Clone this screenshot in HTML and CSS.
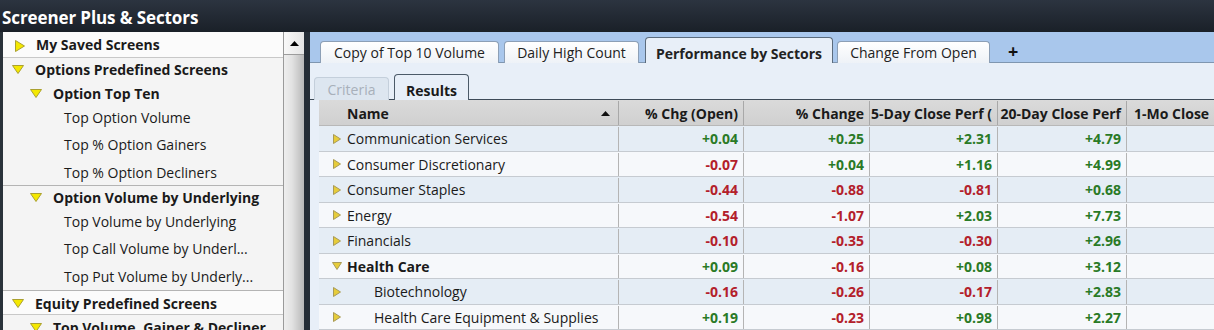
FILE: index.html
```html
<!DOCTYPE html>
<html>
<head>
<meta charset="utf-8">
<link rel="stylesheet" href="styles.css">
</head>
<body>
<div class="app">
  <div class="titlebar">Screener Plus &amp; Sectors</div>
  <div class="main">
    <div class="left">
      <div class="tree">
        <div class="row top first"><svg class="tri-r" viewBox="0 0 10 12"><polygon points="0.5,0.5 9.5,6 0.5,11.5"/></svg><span>My Saved Screens</span></div>
        <div class="grp g5">
          <div class="row top h23"><svg class="tri-d" viewBox="0 0 12 9"><polygon points="0.5,0.5 11.5,0.5 6,8.5"/></svg><span>Options Predefined Screens</span></div>
          <div class="row lvl1 h24"><svg class="tri-d" viewBox="0 0 12 9"><polygon points="0.5,0.5 11.5,0.5 6,8.5"/></svg><span>Option Top Ten</span></div>
          <div class="row leaf h25">Top Option Volume</div>
          <div class="row leaf h27">Top % Option Gainers</div>
          <div class="row leaf h28">Top % Option Decliners</div>
        </div>
        <div class="grp g4">
          <div class="row lvl1 h23"><svg class="tri-d" viewBox="0 0 12 9"><polygon points="0.5,0.5 11.5,0.5 6,8.5"/></svg><span>Option Volume by Underlying</span></div>
          <div class="row leaf h25">Top Volume by Underlying</div>
          <div class="row leaf h27">Top Call Volume by Underl...</div>
          <div class="row leaf h29">Top Put Volume by Underly...</div>
        </div>
        <div class="row top eq"><svg class="tri-d" viewBox="0 0 12 9"><polygon points="0.5,0.5 11.5,0.5 6,8.5"/></svg><span>Equity Predefined Screens</span></div>
        <div class="row lvl1 last"><svg class="tri-d" viewBox="0 0 12 9"><polygon points="0.5,0.5 11.5,0.5 6,8.5"/></svg><span>Top Volume, Gainer &amp; Decliner</span></div>
      </div>
      <div class="scroll">
        <div class="sbtn"><svg viewBox="0 0 9 5"><polygon points="0,5 9,5 4.5,0"/></svg></div>
        <div class="strack"></div>
      </div>
    </div>
    <div class="divider"></div>
    <div class="right">
      <div class="tabstrip">
        <div class="tab t1">Copy of Top 10 Volume</div>
        <div class="tab t2">Daily High Count</div>
        <div class="tab t3 active">Performance by Sectors</div>
        <div class="tab t4">Change From Open</div>
        <div class="plus">+</div>
      </div>
      <div class="subbar">
        <div class="stab disabled">Criteria</div>
        <div class="stab on">Results</div>
      </div>
      <div class="gridwrap">
        <div class="grid">
          <div class="hrow">
            <div class="hc name"><span>Name</span><svg class="sort" viewBox="0 0 9 5"><polygon points="0,5 9,5 4.5,0"/></svg></div>
            <div class="hc">% Chg (Open)</div>
            <div class="hc">% Change</div>
            <div class="hc">5-Day Close Perf (</div>
            <div class="hc">20-Day Close Perf</div>
            <div class="hc lastc">1-Mo Close</div>
          </div>
          <div class="drow odd">
            <div class="c name"><svg class="ntri" viewBox="0 0 8 10"><polygon points="0.5,0.5 7.5,5 0.5,9.5"/></svg>Communication Services</div>
            <div class="c up">+0.04</div><div class="c up">+0.25</div><div class="c up">+2.31</div><div class="c up">+4.79</div><div class="c"></div>
          </div>
          <div class="drow">
            <div class="c name"><svg class="ntri" viewBox="0 0 8 10"><polygon points="0.5,0.5 7.5,5 0.5,9.5"/></svg>Consumer Discretionary</div>
            <div class="c dn">-0.07</div><div class="c up">+0.04</div><div class="c up">+1.16</div><div class="c up">+4.99</div><div class="c"></div>
          </div>
          <div class="drow odd">
            <div class="c name"><svg class="ntri" viewBox="0 0 8 10"><polygon points="0.5,0.5 7.5,5 0.5,9.5"/></svg>Consumer Staples</div>
            <div class="c dn">-0.44</div><div class="c dn">-0.88</div><div class="c dn">-0.81</div><div class="c up">+0.68</div><div class="c"></div>
          </div>
          <div class="drow">
            <div class="c name"><svg class="ntri" viewBox="0 0 8 10"><polygon points="0.5,0.5 7.5,5 0.5,9.5"/></svg>Energy</div>
            <div class="c dn">-0.54</div><div class="c dn">-1.07</div><div class="c up">+2.03</div><div class="c up">+7.73</div><div class="c"></div>
          </div>
          <div class="drow odd">
            <div class="c name"><svg class="ntri" viewBox="0 0 8 10"><polygon points="0.5,0.5 7.5,5 0.5,9.5"/></svg>Financials</div>
            <div class="c dn">-0.10</div><div class="c dn">-0.35</div><div class="c dn">-0.30</div><div class="c up">+2.96</div><div class="c"></div>
          </div>
          <div class="drow">
            <div class="c name bold"><svg class="ntri" viewBox="0 0 10 8"><polygon points="0.5,0.5 9.5,0.5 5,7.5"/></svg>Health Care</div>
            <div class="c up">+0.09</div><div class="c dn">-0.16</div><div class="c up">+0.08</div><div class="c up">+3.12</div><div class="c"></div>
          </div>
          <div class="drow odd">
            <div class="c name sub"><svg class="ntri" viewBox="0 0 8 10"><polygon points="0.5,0.5 7.5,5 0.5,9.5"/></svg><span>Biotechnology</span></div>
            <div class="c dn">-0.16</div><div class="c dn">-0.26</div><div class="c dn">-0.17</div><div class="c up">+2.83</div><div class="c"></div>
          </div>
          <div class="drow">
            <div class="c name sub"><svg class="ntri" viewBox="0 0 8 10"><polygon points="0.5,0.5 7.5,5 0.5,9.5"/></svg><span>Health Care Equipment &amp; Supplies</span></div>
            <div class="c up">+0.19</div><div class="c dn">-0.23</div><div class="c up">+0.98</div><div class="c up">+2.27</div><div class="c"></div>
          </div>
        </div>
      </div>
    </div>
  </div>
</div>
</body>
</html>
```
FILE: styles.css
```css
* { box-sizing: border-box; }
html, body { margin: 0; padding: 0; }
body {
  width: 1214px; height: 330px; overflow: hidden;
  font-family: "Open Sans", "Noto Sans", sans-serif;
  font-size: 14px; color: #1a1a1a; background: #1d242c;
}
.app { display: flex; flex-direction: column; height: 330px; }
.titlebar {
  height: 32px; flex: none;
  background: linear-gradient(#2c3440, #1a2028);
  color: #fff; font-weight: 700; font-size: 17px;
  padding: 7px 0 0 2px; letter-spacing: -0.1px; line-height: 22px;
}
.main { flex: 1; display: flex; min-height: 0; }
.left {
  width: 304px; flex: none; display: flex;
  border-left: 3px solid #2a323a; background: #f4f4f4;
}
.tree { flex: 1; display: flex; flex-direction: column; border-right: 1px solid #9a9a9a; overflow: hidden; min-width: 0; }
.row { display: flex; align-items: center; height: 25.6px; flex: none; white-space: nowrap; }
.grp { display: flex; flex-direction: column; flex: none; }
.g5 { height: 128px; border-top: 1px solid #c8c8c8; }
.g4 { height: 105px; border-top: 1px solid #b4b4b4; }
.h23 { height: 23px; }
.h24 { height: 24px; }
.h25 { height: 25px; }
.h27 { height: 27px; padding-top: 1px; }
.h28 { height: 28px; padding-top: 2px; }
.h29 { height: 29px; padding-top: 2px; }
.g4 .h25 { height: 25.5px; }
.g4 .h29 { height: 28.5px; }
.row.first { height: 25px; background: #fbfbfb; }
.row.eq { height: 25px; background: #fbfbfb; border-top: 1px solid #b4b4b4; border-bottom: 1px solid #c8c8c8; padding-top: 2px; }
.row.last { height: 25px; }
.row.top { font-weight: 700; padding-left: 9px; }
.row.lvl1 { font-weight: 700; padding-left: 27px; }
.row.leaf { padding-left: 61px; }
.tri-r { width: 10px; height: 12px; margin: 3px 11px 0 3px; flex: none; }
.tri-d { width: 12px; height: 9px; margin-right: 11px; flex: none; }
.tri-r polygon, .tri-d polygon { fill: #f4e800; stroke: #aaa030; stroke-width: 1; }
.scroll { width: 20px; flex: none; display: flex; flex-direction: column; background: #e6e6e6; }
.sbtn {
  height: 23px; flex: none; display: flex; align-items: center; justify-content: center;
  background: linear-gradient(90deg, #f8f8f8, #e4e4e4); border-bottom: 1px solid #9c9c9c;
}
.sbtn svg { width: 9px; height: 5px; }
.sbtn polygon { fill: #000; }
.strack { flex: 1; background: linear-gradient(90deg, #eeeeee 0%, #e2e2e2 40%, #b8b8b8 100%); }
.divider { width: 6px; flex: none; background: #252d36; }
.right { flex: 1; display: flex; flex-direction: column; min-width: 0; background: #e8eff8; }
.tabstrip {
  height: 31px; flex: none; background: #a9c7ec;
  display: flex; align-items: flex-end; padding-left: 10px;
  border-bottom: 1px solid #7f96b0;
}
.tab {
  height: 22px; margin-bottom: -1px; margin-right: 5px;
  border: 1px solid #8c9fb6; border-bottom: none; border-radius: 4px 4px 0 0;
  background: linear-gradient(#ffffff, #eef2f7);
  display: flex; align-items: center; justify-content: center;
  white-space: nowrap; color: #222;
}
.t1 { width: 179px; }
.t2 { width: 135px; margin-right: 6px; }
.t3 { width: 188px; margin-right: 4px; }
.t4 { width: 153px; }
.tab.active {
  height: 26px; background: #e8eff8; font-weight: 700; border-color: #5b6b7c;
  position: relative; z-index: 1; padding-top: 5px;
}
.plus { font-weight: 700; font-size: 18px; margin-left: 13px; align-self: center; padding-top: 8px; color: #111; }
.subbar {
  height: 37px; flex: none; display: flex; align-items: flex-end; padding-left: 4px;
  border-bottom: 1px solid #3d4a58;
}
.stab {
  width: 75px; margin-right: 5px; margin-bottom: -1px;
  display: flex; align-items: center; justify-content: center;
  border-radius: 4px 4px 0 0; white-space: nowrap;
}
.stab.disabled { height: 23px; color: #a8b0ba; background: #dde6f0; border: 1px solid #c4cfdb; border-bottom: none; }
.stab.on { height: 26px; font-weight: 700; background: #e8eff8; border: 1px solid #4c5a68; border-bottom: none; position: relative; z-index: 1; padding-top: 5px; }
.gridwrap { flex: 1; padding-left: 9px; min-height: 0; overflow: hidden; }
.grid { width: 900px; }
.hrow, .drow { display: grid; grid-template-columns: 300px 125px 126px 128px 129px 92px; }
.hrow { height: 26px; background: linear-gradient(#dadada, #d0d0d0); border-bottom: 1px solid #b8b8b8; padding-top: 1px; }
.hc {
  display: flex; align-items: center; justify-content: flex-end;
  font-weight: 700; padding-right: 5px; border-right: 1px solid #a8a8a8; white-space: nowrap; overflow: hidden;
}
.hc.name { justify-content: space-between; padding-left: 28px; padding-right: 8px; }
.hc.lastc { justify-content: flex-start; padding-left: 7px; border-right: none; }
.sort { width: 9px; height: 5px; }
.sort polygon { fill: #111; }
.drow { height: 25.5px; background: #f6f8fb; border-bottom: 1px solid #c6cbd1; padding-top: 1px; }
.drow.odd { background: #e5edf5; }
.c {
  display: flex; align-items: center; justify-content: flex-end;
  padding-right: 5px; border-right: 1px solid #b4b4b4; font-weight: 700; white-space: nowrap;
}
.c:last-child { border-right: none; }
.c.name { justify-content: flex-start; padding-left: 14px; font-weight: 400; }
.c.name.bold { font-weight: 700; }
.c.sub span { margin-left: 27px; }
.ntri { width: 8px; height: 10px; margin-right: 6px; flex: none; }
.ntri polygon { fill: #e6cc3a; stroke: #a89a58; stroke-width: 1; }
.c.bold .ntri { width: 10px; height: 8px; margin-left: -1px; margin-right: 5px; }
.up { color: #2a7a26; }
.dn { color: #b3202a; }
```
